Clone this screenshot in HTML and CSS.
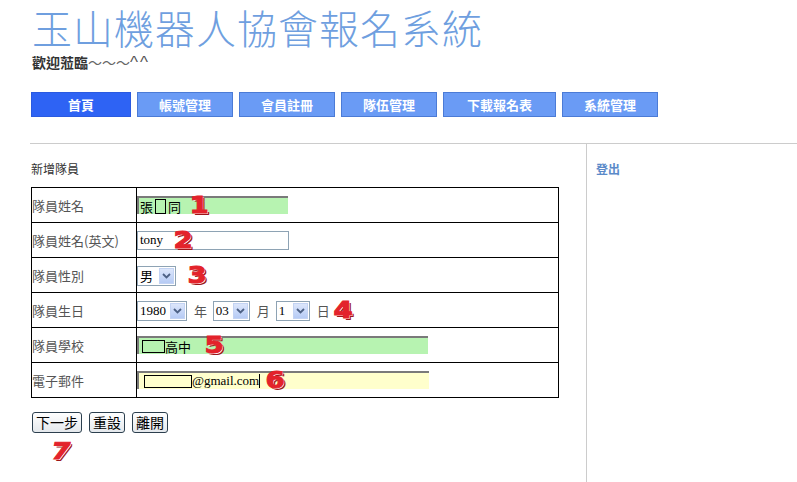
FILE: index.html
```html
<!DOCTYPE html>
<html lang="zh-Hant">
<head>
<meta charset="UTF-8">
<title>玉山機器人協會報名系統</title>
<link rel="stylesheet" href="styles.css">
</head>
<body>

<div class="header">
    <h1 class="title">玉山機器人協會報名系統</h1>
    <div class="welcome">歡迎蒞臨<span class="tilde">～～～</span><span class="hats">^^</span></div>
    <div class="nav">
        <a class="active" href="#">首頁</a>
        <a href="#">帳號管理</a>
        <a href="#">會員註冊</a>
        <a href="#">隊伍管理</a>
        <a class="wide" href="#">下載報名表</a>
        <a href="#">系統管理</a>
    </div>
</div>

<div class="main">
    <div class="content">
        <div class="caption">新增隊員</div>
        <table class="form">
            <tr>
                <td class="label">隊員姓名</td>
                <td class="cell">
                    <div class="field f-name">張<span class="tofu"></span>同</div>
                    <span class="num n1">1</span>
                </td>
            </tr>
            <tr>
                <td class="label">隊員姓名(英文)</td>
                <td class="cell">
                    <div class="field f-en">tony</div>
                    <span class="num n2">2</span>
                </td>
            </tr>
            <tr>
                <td class="label">隊員性別</td>
                <td class="cell">
                    <span class="sel s-sex">男<span class="arrow"><svg width="9" height="6" viewBox="0 0 9 6"><path d="M1 1 L4.5 4.5 L8 1" fill="none" stroke="#4d6185" stroke-width="1.8"/></svg></span></span>
                    <span class="num n3">3</span>
                </td>
            </tr>
            <tr>
                <td class="label">隊員生日</td>
                <td class="cell">
                    <span class="sel s-year">1980<span class="arrow"><svg width="9" height="6" viewBox="0 0 9 6"><path d="M1 1 L4.5 4.5 L8 1" fill="none" stroke="#4d6185" stroke-width="1.8"/></svg></span></span>
                    <span class="unit">年</span>
                    <span class="sel s-month">03<span class="arrow"><svg width="9" height="6" viewBox="0 0 9 6"><path d="M1 1 L4.5 4.5 L8 1" fill="none" stroke="#4d6185" stroke-width="1.8"/></svg></span></span>
                    <span class="unit">月</span>
                    <span class="sel s-day">1<span class="arrow"><svg width="9" height="6" viewBox="0 0 9 6"><path d="M1 1 L4.5 4.5 L8 1" fill="none" stroke="#4d6185" stroke-width="1.8"/></svg></span></span>
                    <span class="unit">日</span>
                    <span class="num n4">4</span>
                </td>
            </tr>
            <tr>
                <td class="label">隊員學校</td>
                <td class="cell">
                    <div class="field f-school"><span class="blank b-school"></span>高中</div>
                    <span class="num n5">5</span>
                </td>
            </tr>
            <tr>
                <td class="label">電子郵件</td>
                <td class="cell">
                    <div class="field f-mail"><span class="blank b-mail"></span>@gmail.com<span class="caret"></span></div>
                    <span class="num n6">6</span>
                </td>
            </tr>
        </table>
        <div class="buttons">
            <button>下一步</button>
            <button>重設</button>
            <button>離開</button>
        </div>
        <div class="num n7">7</div>
    </div>
    <div class="side">
        <a class="logout" href="#">登出</a>
    </div>
</div>

</body>
</html>
```

FILE: styles.css
```css
body {
    margin: 0;
    background-color: #ffffff;
    font-family: "Noto Sans CJK TC", "Liberation Sans", sans-serif;
    color: #333333;
}

.header {
    padding-left: 31px;
}

.title {
    margin: 0;
    padding-top: 2px;
    padding-left: 1px;
    font-size: 40px;
    line-height: 50px;
    font-weight: 300;
    color: #6f9fdf;
    letter-spacing: 1px;
}

.welcome {
    margin-top: 1px;
    padding-left: 1px;
    font-size: 14px;
    line-height: 18px;
    font-weight: bold;
    color: #333333;
}

.tilde {
    font-weight: normal;
    color: #666666;
}

.hats {
    font-family: "Liberation Sans", sans-serif;
    font-weight: normal;
    font-size: 17px;
    letter-spacing: 2px;
    color: #555555;
}

.nav {
    display: flex;
    gap: 6px;
    margin-top: 20px;
}

.nav a {
    display: block;
    height: 23px;
    line-height: 23px;
    padding: 0 21px;
    border: 1px solid #4b7bd6;
    background-color: #6a9bf5;
    color: #ffffff;
    font-size: 13px;
    font-weight: bold;
    text-decoration: none;
    text-align: center;
}

.nav a.active {
    padding: 0 36px;
    border-color: #2a5ae0;
    background-color: #2e63f4;
}

.nav a.wide {
    padding: 0 23px;
}

.main {
    display: flex;
    margin-top: 26px;
    margin-left: 30px;
    border-top: 1px solid #cccccc;
    min-height: 340px;
}

.content {
    width: 555px;
    padding-left: 1px;
    border-right: 1px solid #cccccc;
    position: relative;
}

.caption {
    margin-top: 17px;
    font-size: 12px;
    line-height: 16px;
    color: #333333;
}

.form {
    margin-top: 10px;
    width: 528px;
    border-collapse: collapse;
    border: 1px solid #000000;
}

.form td {
    height: 34px;
    border: 1px solid #000000;
    padding: 0;
    vertical-align: middle;
}

.label {
    width: 104px;
    font-size: 13px;
    color: #555555;
    padding-left: 1px;
}

.cell {
    position: relative;
    font-size: 13px;
    color: #000000;
}

.field {
    display: flex;
    align-items: center;
    box-sizing: border-box;
    font-size: 13px;
    color: #000000;
}

.f-name {
    width: 151px;
    height: 18px;
    background-color: #b7f3b1;
    border-top: 2px solid #7a7a7a;
    border-left: 2px solid #7a7a7a;
    padding-left: 1px;
}

.f-en {
    width: 152px;
    height: 19px;
    border: 1px solid #8ea3b4;
    padding-left: 2px;
    font-family: "Liberation Serif", serif;
    font-size: 13px;
}

.f-school {
    width: 291px;
    height: 18px;
    background-color: #b7f3b1;
    border-top: 2px solid #7a7a7a;
    border-left: 2px solid #7a7a7a;
    padding-left: 3px;
}

.f-mail {
    width: 292px;
    height: 18px;
    background-color: #ffffcc;
    border-top: 2px solid #7a7a7a;
    border-left: 2px solid #7a7a7a;
    padding-left: 5px;
    font-family: "Liberation Serif", serif;
    font-size: 13px;
}

.tofu {
    display: inline-block;
    width: 9px;
    height: 13px;
    border: 1px solid #000000;
    margin: 0 2px;
}

.blank {
    display: inline-block;
    height: 11px;
    border: 1px solid #000000;
}

.b-school {
    width: 21px;
    background-color: #b7f3b1;
}

.b-mail {
    width: 46px;
    background-color: #ffffcc;
}

.caret {
    display: inline-block;
    width: 1px;
    height: 14px;
    background-color: #000000;
}

.sel {
    display: inline-flex;
    align-items: center;
    justify-content: space-between;
    box-sizing: border-box;
    height: 20px;
    border: 1px solid #8ea3b4;
    padding: 0 1px 0 2px;
    font-family: "Liberation Serif", serif;
    font-size: 13px;
    color: #000000;
    vertical-align: middle;
}

.s-sex {
    width: 39px;
    font-family: "Noto Sans CJK TC", sans-serif;
}

.s-year {
    width: 50px;
}

.s-month {
    width: 37px;
}

.s-day {
    width: 34px;
}

.arrow {
    display: inline-flex;
    align-items: center;
    justify-content: center;
    width: 15px;
    height: 16px;
    background: linear-gradient(#dce6fb, #b6cbf5);
    border: 1px solid #c3d3f3;
    box-sizing: border-box;
}

.unit {
    display: inline-block;
    margin: 0 3px 0 4px;
    font-size: 13px;
    color: #555555;
    vertical-align: middle;
}

.num {
    position: absolute;
    top: 4px;
    font-family: "DejaVu Sans", sans-serif;
    font-weight: bold;
    font-size: 23px;
    line-height: 26px;
    color: #e3232b;
    -webkit-text-stroke: 1px #e3232b;
    text-shadow: 1px 1px 0 #ffffff, 2px 2px 0 #9b1518;
    transform: scaleX(1.2);
}

.n1 { left: 54px; }
.n2 { left: 38px; }
.n3 { left: 52px; }
.n4 { left: 198px; }
.n5 { left: 69px; }
.n6 { left: 130px; }

.n7 {
    position: static;
    display: inline-block;
    margin: 5px 0 0 22px;
    transform: scaleX(1.2) skewX(-10deg);
}

.buttons {
    display: flex;
    gap: 7px;
    margin-top: 14px;
    padding-left: 1px;
}

button {
    height: 21px;
    padding: 0 3px;
    border: 1px solid #2c3f4e;
    border-radius: 3px;
    background: linear-gradient(#ffffff, #e4e8ec);
    font-family: "Noto Sans CJK TC", sans-serif;
    font-size: 14px;
    line-height: 17px;
    color: #000000;
}

.side {
    padding: 17px 0 0 9px;
    font-size: 12px;
    line-height: 16px;
}

.logout {
    font-weight: bold;
    color: #5b8ac9;
    text-decoration: none;
}
```
